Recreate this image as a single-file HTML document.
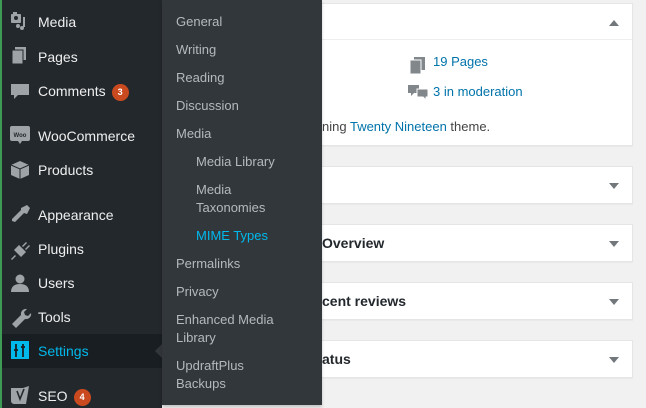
<!DOCTYPE html>
<html><head><meta charset="utf-8"><style>
*{margin:0;padding:0;box-sizing:border-box}
body{width:646px;height:408px;overflow:hidden;background:#f1f1f1;font-family:"Liberation Sans",Arial,sans-serif;position:relative}
#side{position:absolute;left:0;top:0;width:162px;height:408px;background:#23282d}
#stripe{position:absolute;left:0;top:0;width:2px;height:408px;background:#3f9a56}
.it{position:absolute;left:38px;color:#eee;font-size:14px;line-height:20px}
.badge{display:inline-block;width:17px;height:17px;border-radius:50%;background:#ca4a1f;color:#fff;font-size:9px;font-weight:bold;text-align:center;line-height:17px;vertical-align:1px;margin-left:6px}
#sel{position:absolute;left:2px;top:334px;width:160px;height:34px;background:#191e23}
#sub{position:absolute;left:162px;top:0;width:160px;height:405px;background:#32373c;box-shadow:0 2px 3px rgba(0,0,0,.2)}
.s{position:absolute;left:14px;color:#b4b9be;font-size:13px;line-height:18px}
.s2{left:34px}
.panel{position:absolute;left:322px;width:311px;background:#fff;border:1px solid #e5e5e5;border-left:none;box-shadow:0 1px 1px rgba(0,0,0,.04)}
.arr{position:absolute;right:13px;width:0;height:0;border-left:5px solid transparent;border-right:5px solid transparent}
.dn{border-top:6px solid #72777c}
.up{border-bottom:6px solid #72777c}
.ht{position:absolute;left:0;font-size:14px;font-weight:bold;color:#23282d}
a{color:#0073aa;text-decoration:none}
</style></head><body>
<div id="side"></div>
<div id="stripe"></div>
<div id="sel"></div>
<svg style="position:absolute;left:0;top:0" width="162" height="408" fill="#9ea3a8">
<rect x="11" y="14" width="10" height="9" rx="1"/><rect x="13" y="12" width="4" height="3"/><circle cx="16" cy="18" r="2" fill="#23282d"/><rect x="23" y="17" width="2" height="10"/><circle cx="22" cy="28" r="2"/><circle cx="18" cy="26" r="2"/>
<rect x="15" y="47" width="11" height="13"/><rect x="12" y="50" width="11" height="14" stroke="#23282d" stroke-width="1"/>
<path d="M11 84h18v11h-11l-4 4v-4h-3z"/>
<rect x="10" y="126" width="20" height="15" rx="2"/><path d="M18 141l2 3 2-3z"/><text x="20" y="137" font-size="6" font-family="Liberation Sans" fill="#23282d" text-anchor="middle" font-weight="bold">Woo</text>
<path d="M20 161l9 4v10l-9 4-9-4v-10z"/><path d="M11 165l9 4 9-4M20 169v10" stroke="#23282d" stroke-width="1" fill="none"/>
<path d="M21 208l6-3 3 3-3 6-3-1-6 6-3 3-3-1 0-2 3-3 6-6z"/>
<path d="M14 250l5-5 7 7-5 5z"/><path d="M22 246l4-4 1 1-4 4zM25 249l4-4 1 1-4 4zM15 255l-4 4 1 1 4-4z"/>
<circle cx="20" cy="279" r="4.5"/><path d="M11 292c0-6 4-8 9-8s9 2 9 8z"/>
<path d="M12 324l9-9a5 5 0 0 1 6-6l-3 3 1 3 3 1 3-3a5 5 0 0 1-6 6l-9 9z"/>
<rect x="11" y="341" width="18" height="18" fill="#00b9eb"/>
<path d="M16 344v13M14 350h4M23 344v13M21 347h4" stroke="#191e23" stroke-width="1.8"/>
<path d="M11 388h12l6-2-3 18h-12a3 3 0 0 1-3-3z"/><path d="M17 391l3 8 4-10" stroke="#23282d" stroke-width="1.6" fill="none"/>
<path d="M162 344l-7 7 7 7z" fill="#32373c"/>
</svg>
<div class="it" style="top:12px">Media</div>
<div class="it" style="top:47px">Pages</div>
<div class="it" style="top:81px">Comments<span class="badge">3</span></div>
<div class="it" style="top:126px">WooCommerce</div>
<div class="it" style="top:160px">Products</div>
<div class="it" style="top:205px">Appearance</div>
<div class="it" style="top:239px">Plugins</div>
<div class="it" style="top:273px">Users</div>
<div class="it" style="top:307px">Tools</div>
<div class="it" style="top:341px;color:#00b9eb">Settings</div>
<div class="it" style="top:386px">SEO<span class="badge">4</span></div>

<div class="panel" style="top:3px;height:143px">
 <div style="position:absolute;left:0;right:0;top:35px;border-top:1px solid #eee"></div>
 <div class="arr up" style="top:16px"></div>
 <svg style="position:absolute;left:86px;top:50px" width="22" height="50" fill="#82878c">
  <rect x="6" y="3" width="11" height="13"/><rect x="2" y="6" width="11" height="14" stroke="#fff" stroke-width="1"/>
  <path d="M0 31h11v8h-5l-3 3v-3h-3z"/><path d="M9 35h11v8h-2v3l-3-3h-6z" stroke="#fff" stroke-width="1"/>
 </svg>
 <div style="position:absolute;left:111px;top:50px;font-size:13px"><a>19 Pages</a></div>
 <div style="position:absolute;left:111px;top:80px;font-size:13px"><a>3 in moderation</a></div>
 <div style="position:absolute;left:0;top:115px;font-size:13px;color:#444">ning <a>Twenty Nineteen</a> theme.</div>
</div>
<div class="panel" style="top:166px;height:38px"><div class="arr dn" style="top:16px"></div></div>
<div class="panel" style="top:224px;height:38px"><div class="ht" style="top:10px">Overview</div><div class="arr dn" style="top:16px"></div></div>
<div class="panel" style="top:282px;height:38px"><div class="ht" style="top:10px">cent reviews</div><div class="arr dn" style="top:16px"></div></div>
<div class="panel" style="top:340px;height:38px"><div class="ht" style="top:10px">atus</div><div class="arr dn" style="top:16px"></div></div>

<div id="sub">
 <div class="s" style="top:13px">General</div>
 <div class="s" style="top:41px">Writing</div>
 <div class="s" style="top:69px">Reading</div>
 <div class="s" style="top:97px">Discussion</div>
 <div class="s" style="top:125px">Media</div>
 <div class="s s2" style="top:153px">Media Library</div>
 <div class="s s2" style="top:181px">Media<br>Taxonomies</div>
 <div class="s s2" style="top:227px;color:#00b9eb">MIME Types</div>
 <div class="s" style="top:255px">Permalinks</div>
 <div class="s" style="top:283px">Privacy</div>
 <div class="s" style="top:311px">Enhanced Media<br>Library</div>
 <div class="s" style="top:357px">UpdraftPlus<br>Backups</div>
</div>
</body></html>
